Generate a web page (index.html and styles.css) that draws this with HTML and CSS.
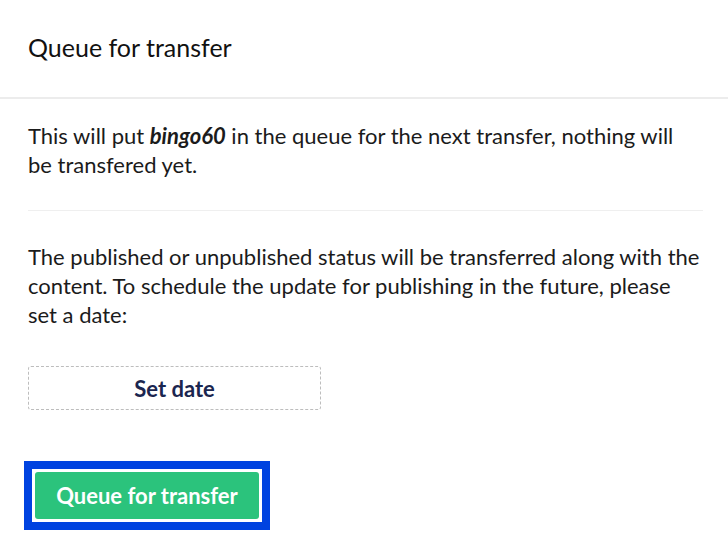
FILE: index.html
```html
<!DOCTYPE html>
<html lang="en">
<head>
    <meta charset="UTF-8">
    <meta name="viewport" content="width=device-width, initial-scale=1.0">
    <title>Queue for transfer</title>
    <link rel="stylesheet" href="styles.css">
</head>
<body>
    <!-- header -->
    <div class="panel-header">
        <h1>Queue for transfer</h1>
    </div>

    <!-- content -->
    <div class="panel-body">
        <p class="intro">This will put <em>bingo60</em> in the queue for the next transfer, nothing will be transfered yet.</p>

        <hr class="divider">

        <p class="status">The published or unpublished status will be transferred along with the content. To schedule the update for publishing in the future, please set a date:</p>

        <button class="set-date">Set date</button>

        <div class="actions">
            <span class="focus-ring">
                <button class="btn-queue">Queue for transfer</button>
            </span>
        </div>
    </div>
</body>
</html>
```

FILE: styles.css
```css
body {
    font-family: Lato, "Open Sans", Arial, sans-serif;
    background-color: white;
    color: #1b1b1b;
    margin: 0;
    padding: 0;
}

.panel-header {
    height: 97px;
    padding: 0 28px;
    display: flex;
    align-items: center;
    border-bottom: 2px solid #ececec;
}

.panel-header h1 {
    margin: 0 0 3px 0;
    font-size: 25px;
    font-weight: normal;
    color: #111;
}

.panel-body {
    padding: 22px 25px 0 28px;
}

p {
    margin: 0;
    font-size: 22px;
    line-height: 29px;
}

.intro {
    max-width: 660px;
}

.intro em {
    font-weight: bold;
}

.divider {
    border: none;
    border-top: 1px solid #efefef;
    margin: 31px 0 31px 0;
}

.set-date {
    display: block;
    margin-top: 37px;
    width: 293px;
    height: 44px;
    background: white;
    border: 1px dashed #bdbdbd;
    border-radius: 3px;
    font-family: inherit;
    font-size: 22px;
    font-weight: bold;
    color: #1b264f;
    cursor: pointer;
}

.actions {
    margin-top: 51px;
    margin-left: -4px;
}

.focus-ring {
    display: inline-block;
    border: 8px solid #0043e0;
    padding: 3px;
}

.btn-queue {
    display: block;
    width: 224px;
    height: 47px;
    background-color: #2bc37c;
    color: white;
    border: none;
    border-radius: 3px;
    font-family: inherit;
    font-size: 22px;
    font-weight: bold;
    cursor: pointer;
}
```
